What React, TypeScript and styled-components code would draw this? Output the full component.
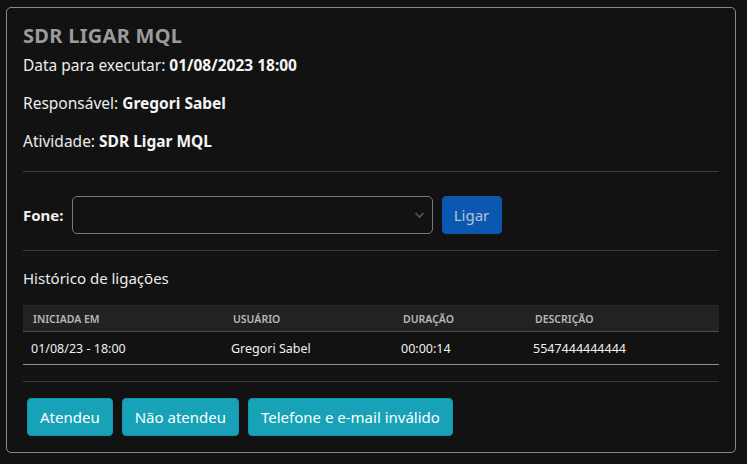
import React from "react";
import styled, { createGlobalStyle } from "styled-components";

const Global = createGlobalStyle`
  html, body { margin: 0; padding: 0; background: #121212; }
  body { font-family: "Noto Sans", "Open Sans", sans-serif; color: #e6e6e6; }
  * { box-sizing: border-box; }
`;

const Page = styled.div`
  padding: 7px 11px 12px 6px;
`;

const Card = styled.section`
  border: 1px solid #8a8a8a;
  border-radius: 5px;
  padding: 16px;
`;

const Title = styled.h2`
  margin: 0 0 6px;
  font-size: 20px;
  line-height: 24px;
  font-weight: 700;
  color: #9b9b9b;
  letter-spacing: 0.3px;
`;

const Info = styled.p`
  margin: 0 0 16px;
  font-size: 15.5px;
  line-height: 22px;
  color: #ececec;
  b { font-weight: 700; color: #f5f5f5; }
`;

const Divider = styled.hr<{ $top?: number; $bottom?: number }>`
  border: 0;
  border-top: 1px solid #3b3b3b;
  margin: ${(p) => p.$top ?? 0}px 0 ${(p) => p.$bottom ?? 0}px;
`;

const PhoneRow = styled.div`
  display: flex;
  align-items: center;
  gap: 8px;
  height: 38px;
`;

const Label = styled.label`
  flex: 0 0 auto;
  font-weight: 700;
  font-size: 15px;
  color: #f0f0f0;
`;

const SelectBox = styled.div`
  width: 361px;
  height: 38px;
  border: 1px solid #7a7a7a;
  border-radius: 5px;
  background: #121212;
  display: flex;
  align-items: center;
  justify-content: flex-end;
  padding-right: 7px;
`;

const LigarButton = styled.button`
  margin-left: 1px;
  height: 38px;
  width: 60px;
  padding: 0;
  border: 1px solid #0a56ad;
  border-radius: 4px;
  background: #0b58b0;
  color: #b9c3cf;
  font-family: inherit;
  font-size: 15px;
`;

const Subtitle = styled.div`
  font-size: 15px;
  line-height: 22px;
  color: #ececec;
  margin: 16px 0 16px;
`;

const Table = styled.table`
  width: 100%;
  border-collapse: collapse;
  table-layout: fixed;
`;

const Th = styled.th<{ $w?: number }>`
  width: ${(p) => (p.$w ? `${p.$w}px` : "auto")};
  text-align: left;
  background: #222222;
  color: #b8b8b8;
  font-size: 10.5px;
  font-weight: 600;
  text-transform: uppercase;
  padding: 0 10px;
  height: 26px;
  border-top: 1px solid #2a2a2a;
  border-bottom: 1px solid #4b4b4b;
`;

const Td = styled.td`
  font-size: 12.5px;
  color: #f0f0f0;
  padding: 0 8px;
  height: 33px;
  border-bottom: 1px solid #8e8e8e;
`;

const Actions = styled.div`
  display: flex;
  gap: 9px;
  padding: 0 4px;
`;

const ActionButton = styled.button`
  height: 38px;
  padding: 0 12px;
  border: 1px solid #1494a8;
  border-radius: 4px;
  background: #17a2b8;
  color: #ffffff;
  font-family: inherit;
  font-size: 15px;
`;

export default function App() {
  return (
    <>
      <Global />
      <Page>
        <Card>
          <Title>SDR LIGAR MQL</Title>
          <Info>
            Data para executar: <b>01/08/2023 18:00</b>
          </Info>
          <Info>
            Responsável: <b>Gregori Sabel</b>
          </Info>
          <Info>
            Atividade: <b>SDR Ligar MQL</b>
          </Info>
          <Divider $top={19} $bottom={24} />
          <PhoneRow>
            <Label>Fone:</Label>
            <SelectBox>
              <svg width="11" height="8" viewBox="0 0 11 8" fill="none">
                <path d="M1.5 2 L5.5 6 L9.5 2" stroke="#5a5a5a" strokeWidth="1.6" />
              </svg>
            </SelectBox>
            <LigarButton>Ligar</LigarButton>
          </PhoneRow>
          <Divider $top={16} />
          <Subtitle>Histórico de ligações</Subtitle>
          <Table>
            <thead>
              <tr>
                <Th $w={200}>Iniciada em</Th>
                <Th $w={170}>Usuário</Th>
                <Th $w={132}>Duração</Th>
                <Th>Descrição</Th>
              </tr>
            </thead>
            <tbody>
              <tr>
                <Td>01/08/23 - 18:00</Td>
                <Td>Gregori Sabel</Td>
                <Td>00:00:14</Td>
                <Td>5547444444444</Td>
              </tr>
            </tbody>
          </Table>
          <Divider $top={16} $bottom={16} />
          <Actions>
            <ActionButton>Atendeu</ActionButton>
            <ActionButton>Não atendeu</ActionButton>
            <ActionButton>Telefone e e-mail inválido</ActionButton>
          </Actions>
        </Card>
      </Page>
    </>
  );
}
